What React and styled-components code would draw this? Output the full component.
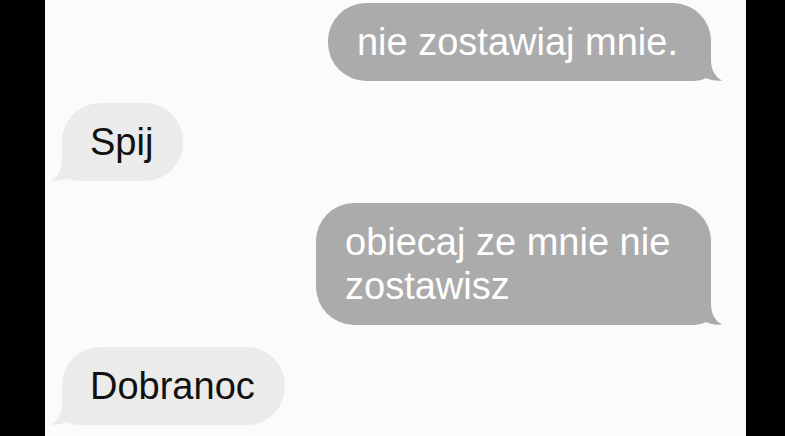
import React from "react";
import styled, { createGlobalStyle } from "styled-components";

const GlobalStyle = createGlobalStyle`
  html, body {
    margin: 0;
    padding: 0;
    background: #000;
  }
  * {
    box-sizing: border-box;
  }
`;

const messages = [
  { id: 1, fromMe: true, text: "nie zostawiaj mnie." },
  { id: 2, fromMe: false, text: "Spij" },
  { id: 3, fromMe: true, text: "obiecaj ze mnie nie zostawisz" },
  { id: 4, fromMe: false, text: "Dobranoc" },
];

const Tail = ({ fromMe }) => (
  <TailSvg $fromMe={fromMe} viewBox="0 0 31 30" width="31" height="30">
    <path d="M0,0 H20 V8 C20,18 23,25 31,29.5 C25,30.5 19,29 15,27 C12,29 7,30 0,30 Z" />
  </TailSvg>
);

const App = () => {
  return (
    <>
      <GlobalStyle />
      <Screen>
        <Thread>
          {messages.map((m) => (
            <Row key={m.id} $fromMe={m.fromMe}>
              <Bubble $fromMe={m.fromMe}>
                {m.text}
                <Tail fromMe={m.fromMe} />
              </Bubble>
            </Row>
          ))}
        </Thread>
      </Screen>
    </>
  );
};

const Screen = styled.div`
  display: flex;
  height: 436px;
  padding-left: 45px;
  background: #000;
  overflow: hidden;
`;

const Thread = styled.div`
  width: 701px;
  height: 100%;
  background: #fbfbfb;
  display: flex;
  flex-direction: column;
  gap: 22px;
  padding: 3px 35px 0 17px;
`;

const Row = styled.div`
  display: flex;
  justify-content: ${(p) => (p.$fromMe ? "flex-end" : "flex-start")};
`;

const Bubble = styled.div`
  position: relative;
  max-width: 395px;
  padding: 17px ${(p) => (p.$fromMe ? "33px 17px 29px" : "30px 17px 28px")};
  border-radius: 38px;
  ${(p) =>
    p.$fromMe
      ? "border-bottom-right-radius: 20px;"
      : "border-bottom-left-radius: 20px;"}
  background: ${(p) => (p.$fromMe ? "#ababab" : "#ebebeb")};
  color: ${(p) => (p.$fromMe ? "#ffffff" : "#111111")};
  font-family: "Liberation Sans", Arial, sans-serif;
  font-size: 38px;
  line-height: 44px;
`;

const TailSvg = styled.svg`
  position: absolute;
  bottom: 0;
  ${(p) => (p.$fromMe ? "right: -11px;" : "left: -11px; transform: scaleX(-1);")}
  fill: ${(p) => (p.$fromMe ? "#ababab" : "#ebebeb")};
`;

export default App;
